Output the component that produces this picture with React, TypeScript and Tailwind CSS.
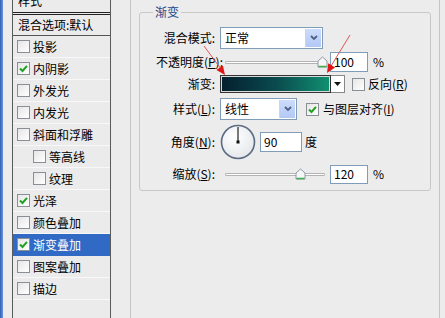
import React from 'react';

function Check({ on }: { on?: boolean }) {
  return (
    <span className="w-[13px] h-[13px] shrink-0 border border-[#8a8f96] bg-gradient-to-br from-[#e6e6e6] to-white flex items-center justify-center">
      {on && (
        <svg width="9" height="9" viewBox="0 0 9 9">
          <path d="M1 4.5 L3.5 7 L8 1.8" stroke="#21a121" strokeWidth="2" fill="none" />
        </svg>
      )}
    </span>
  );
}

function DropButton() {
  return (
    <span className="w-[16px] h-full bg-gradient-to-b from-[#cddcfb] to-[#b3c8f5] border-l border-[#c5d5f7] flex items-center justify-center">
      <svg width="8" height="6" viewBox="0 0 8 6">
        <path d="M1 1 L4 4 L7 1" stroke="#4d6185" strokeWidth="1.8" fill="none" />
      </svg>
    </span>
  );
}

function Select({ value, width }: { value: string; width: string }) {
  return (
    <div className={`${width} h-[22px] bg-white border border-[#7f9db9] flex items-stretch`}>
      <span className="flex-1 flex items-center pl-[4px]">{value}</span>
      <span className="py-[1px] pr-[1px] flex">
        <DropButton />
      </span>
    </div>
  );
}

function Slider({ pos }: { pos: string }) {
  return (
    <div className="w-[100px] h-[16px] relative flex items-center">
      <div className="w-full h-[3px] border border-[#b3b3b3] bg-white rounded-[1px]" />
      <svg className={`absolute top-[2px] ${pos}`} width="11" height="12" viewBox="0 0 11 12">
        <path d="M1 11 L1 5 L5.5 1 L10 5 L10 11 Z" fill="#f6f6f6" stroke="#8c9aa8" />
        <path d="M1.5 10.5 L9.5 10.5" stroke="#3fb04a" strokeWidth="1.5" />
      </svg>
    </div>
  );
}

function NumInput({ value, width, height }: { value: string; width: string; height: string }) {
  return (
    <div className={`${width} ${height} bg-white border border-[#7f9db9] flex items-center pl-[3px]`}>
      {value}
    </div>
  );
}

const items: { label: string; on?: boolean; sub?: boolean; active?: boolean }[] = [
  { label: '投影' },
  { label: '内阴影', on: true },
  { label: '外发光' },
  { label: '内发光' },
  { label: '斜面和浮雕' },
  { label: '等高线', sub: true },
  { label: '纹理', sub: true },
  { label: '光泽', on: true },
  { label: '颜色叠加' },
  { label: '渐变叠加', on: true, active: true },
  { label: '图案叠加' },
  { label: '描边' },
];

export default function App() {
  return (
    <div className="w-[445px] h-[318px] overflow-hidden bg-[#ececec] flex relative text-[12px] leading-[14px] text-black font-['Noto_Sans_CJK_SC',sans-serif]">
      <div className="w-[3px] h-full bg-gradient-to-r from-[#2f5fb8] to-[#6d95d8]" />
      <div className="w-[9px]" />

      {/* style list */}
      <div className="w-[99px] h-full border-x border-[#5a5a5a] bg-[#ebebeb] flex flex-col">
        <div className="h-[12px] overflow-hidden">
          <div className="h-[22px] -mt-[10px] flex items-center pl-[5px]">样式</div>
        </div>
        <div className="h-[3px] border-y border-[#222]" />
        <div className="h-[21px] border-b border-[#555] flex items-center pl-[5px]">混合选项:默认</div>
        {items.map((it) => (
          <div
            key={it.label}
            className={`h-[22px] border-b flex items-center gap-[3px] ${it.sub ? 'pl-[20px]' : 'pl-[4px]'} ${
              it.active ? 'bg-[#316ac5] text-white border-[#316ac5]' : 'border-[#f8f8f8]'
            }`}
          >
            <Check on={it.on} />
            <span>{it.label}</span>
          </div>
        ))}
      </div>

      <div className="w-[19px]" />

      {/* outer group */}
      <div className="w-[310px] h-full border-x border-[#c4c4c4] pl-[8px]">
        <div className="w-[292px] h-[179px] mt-[12px] border border-[#c8c8c8] rounded-[3px] relative flex flex-col">
          <span className="absolute -top-[8px] left-[13px] px-[2px] bg-[#ececec] text-[#27488c]">渐变</span>

          <div className="h-[22px] mt-[14px] flex items-center">
            <span className="w-[75px] text-right">混合模式:</span>
            <div className="ml-[5px]">
              <Select value="正常" width="w-[103px]" />
            </div>
          </div>

          <div className="h-[20px] mt-[3px] flex items-center">
            <span className="w-[83px] text-right">
              不透明度(<u>P</u>):
            </span>
            <div className="ml-[2px]">
              <Slider pos="left-[92px]" />
            </div>
            <div className="ml-[5px]">
              <NumInput value="100" width="w-[38px]" height="h-[20px]" />
            </div>
            <span className="ml-[5px]">%</span>
          </div>

          <div className="h-[18px] mt-[3px] flex items-center">
            <span className="w-[75px] text-right">渐变:</span>
            <div className="ml-[5px] w-[111px] h-[18px] border border-[#333] p-[1px] bg-[#d9d9d9]">
              <div className="w-full h-full bg-gradient-to-r from-[#05202f] via-[#0a4a4e] to-[#119070]" />
            </div>
            <div className="w-[14px] h-[18px] bg-white border border-l-0 border-[#888] flex items-center justify-center">
              <svg width="7" height="4" viewBox="0 0 7 4">
                <path d="M0 0 L7 0 L3.5 4 Z" fill="#111" />
              </svg>
            </div>
            <span className="ml-[7px]">
              <Check />
            </span>
            <span className="ml-[3px]">
              反向(<u>R</u>)
            </span>
          </div>

          <div className="h-[22px] mt-[5px] flex items-center">
            <span className="w-[75px] text-right">
              样式(<u>L</u>):
            </span>
            <div className="ml-[5px]">
              <Select value="线性" width="w-[77px]" />
            </div>
            <span className="ml-[9px]">
              <Check on />
            </span>
            <span className="ml-[4px]">
              与图层对齐(<u>I</u>)
            </span>
          </div>

          <div className="h-[36px] mt-[4px] flex items-center">
            <span className="w-[75px] text-right">
              角度(<u>N</u>):
            </span>
            <svg className="ml-[5px]" width="36" height="36" viewBox="0 0 36 36">
              <defs>
                <radialGradient id="dial" cx="0.4" cy="0.35" r="0.7">
                  <stop offset="0" stopColor="#ffffff" />
                  <stop offset="1" stopColor="#e4e6ea" />
                </radialGradient>
              </defs>
              <circle cx="18" cy="18" r="16.5" fill="url(#dial)" stroke="#5b6b82" strokeWidth="1.6" />
              <line x1="18" y1="18" x2="18" y2="3" stroke="#222" strokeWidth="1.2" />
              <rect x="16.5" y="16.5" width="3" height="3" fill="#111" />
            </svg>
            <div className="ml-[4px]">
              <NumInput value="90" width="w-[42px]" height="h-[20px]" />
            </div>
            <span className="ml-[3px]">度</span>
          </div>

          <div className="h-[18px] mt-[5px] flex items-center">
            <span className="w-[75px] text-right">
              缩放(<u>S</u>):
            </span>
            <div className="ml-[10px]">
              <Slider pos="left-[70px]" />
            </div>
            <div className="ml-[5px]">
              <NumInput value="120" width="w-[38px]" height="h-[19px]" />
            </div>
            <span className="ml-[5px]">%</span>
          </div>
        </div>
      </div>

      {/* red pointer arrows */}
      <svg className="absolute inset-0 pointer-events-none" width="445" height="318" viewBox="0 0 445 318">
        <line x1="204" y1="46" x2="221" y2="69" stroke="#e2545a" strokeWidth="1" />
        <polygon points="225,75 216.5,70 222.9,65.4" fill="#e01515" />
        <line x1="350" y1="35" x2="331" y2="66" stroke="#e2545a" strokeWidth="1" />
        <polygon points="327,73 328.2,63.2 335.1,67.4" fill="#e01515" />
      </svg>
    </div>
  );
}
